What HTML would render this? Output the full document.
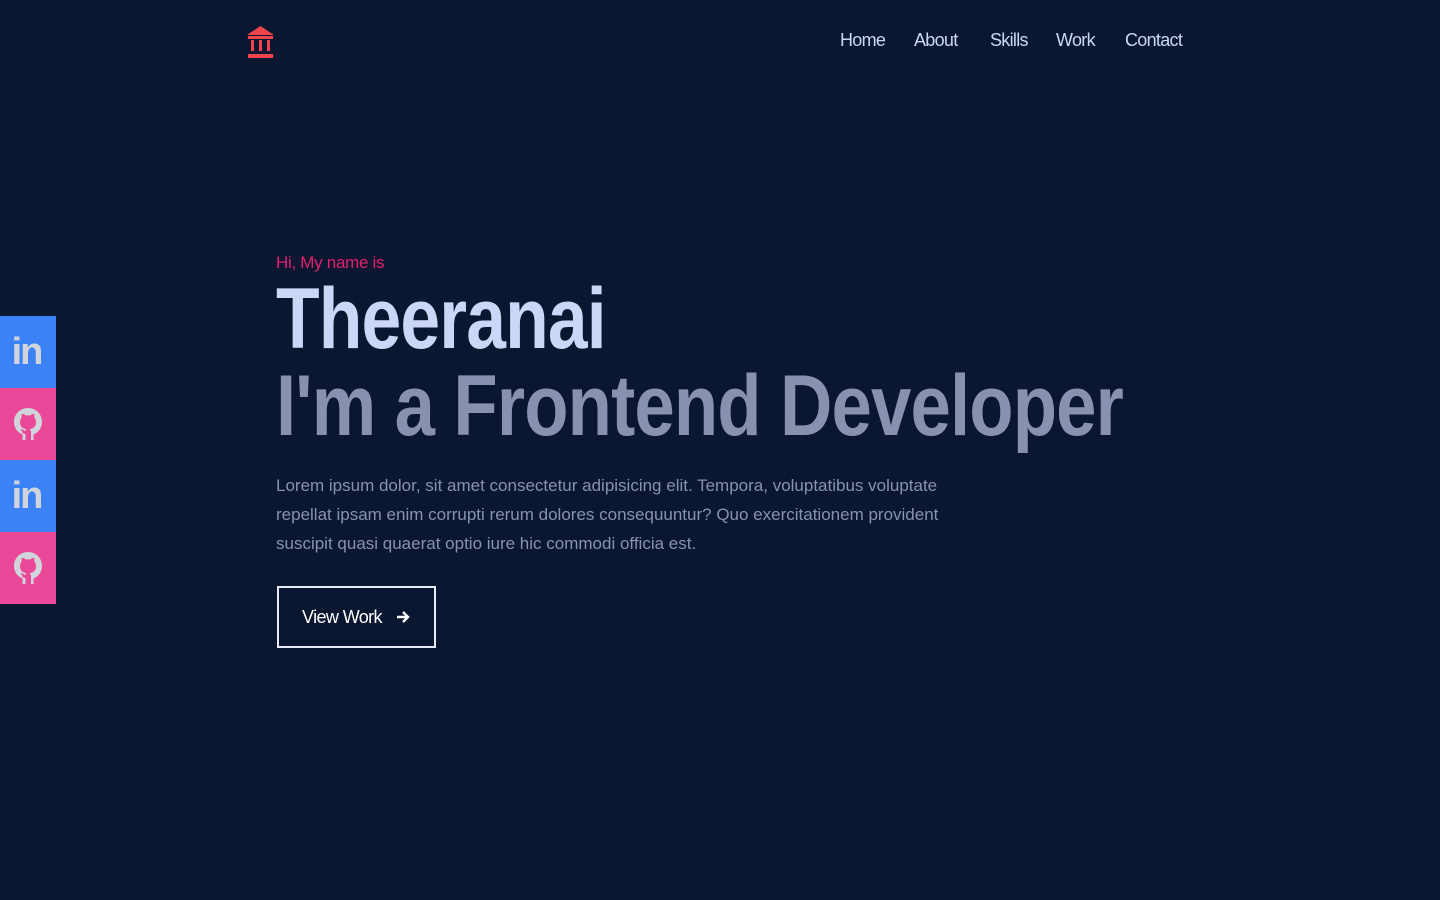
<!DOCTYPE html>
<html><head><meta charset="utf-8"><style>
*{margin:0;padding:0;box-sizing:border-box}
body{width:1440px;height:900px;background:#0b1730;font-family:"Liberation Sans",sans-serif;position:relative;overflow:hidden}
.nav a{position:absolute;top:30px;color:#ccd6f6;font-size:18px;text-decoration:none;letter-spacing:-0.7px}
.side{position:absolute;left:0;width:56px;height:72px;display:flex;align-items:center;justify-content:center}
.b{background:#3b82f6}.p{background:#ec4899}
.big{position:absolute;left:276px;font-weight:bold;font-size:86px;transform-origin:0 0;white-space:nowrap;letter-spacing:-1px}
</style></head><body>
<svg style="position:absolute;left:247px;top:26px" width="27" height="33" viewBox="0 0 27 33">
<path d="M13.5 0L0 9h27z" fill="#f0444c"/><rect x="1" y="10" width="25" height="3" fill="#f0444c"/>
<rect x="4" y="14" width="3" height="11" fill="#f0444c"/><rect x="12" y="14" width="3" height="11" fill="#f0444c"/><rect x="20" y="14" width="3" height="11" fill="#f0444c"/>
<rect x="1" y="28" width="25" height="4" fill="#f0444c"/></svg>
<div class="nav"><a style="left:840px">Home</a><a style="left:914px">About</a><a style="left:990px">Skills</a><a style="left:1056px">Work</a><a style="left:1125px">Contact</a></div>

<div class="side b" style="top:316px"><span style="color:#d1d5db;font-weight:bold;font-size:38px;letter-spacing:-2px;margin-left:-3px">in</span></div>
<div class="side p" style="top:388px"><svg width="30" height="34" viewBox="0 0 30 34"><path d="M15 1C7 1 1 7 1 15c0 6 3.5 10.5 8.5 12.5V33h3v-6c-1.5 0-3-1-3.5-2.5L8 22c2 0 3 1.5 4 2.5.3-1 .8-1.8 1.5-2.2C9 21.5 7 19 7 15c0-1.8.6-3.2 1.6-4.3-.2-1-.2-2.6.4-4 1.5 0 3 1 4 1.8a10 10 0 014 0c1-.8 2.5-1.8 4-1.8.6 1.4.6 3 .4 4C22.4 11.8 23 13.2 23 15c0 4-2 6.5-6.5 7.3.8.6 1.5 1.7 1.5 3.2V33h2.5v-5.5C25.5 25.5 29 21 29 15 29 7 23 1 15 1z" fill="#d1d5db"/></svg></div>
<div class="side b" style="top:460px"><span style="color:#d1d5db;font-weight:bold;font-size:38px;letter-spacing:-2px;margin-left:-3px">in</span></div>
<div class="side p" style="top:532px"><svg width="30" height="34" viewBox="0 0 30 34"><path d="M15 1C7 1 1 7 1 15c0 6 3.5 10.5 8.5 12.5V33h3v-6c-1.5 0-3-1-3.5-2.5L8 22c2 0 3 1.5 4 2.5.3-1 .8-1.8 1.5-2.2C9 21.5 7 19 7 15c0-1.8.6-3.2 1.6-4.3-.2-1-.2-2.6.4-4 1.5 0 3 1 4 1.8a10 10 0 014 0c1-.8 2.5-1.8 4-1.8.6 1.4.6 3 .4 4C22.4 11.8 23 13.2 23 15c0 4-2 6.5-6.5 7.3.8.6 1.5 1.7 1.5 3.2V33h2.5v-5.5C25.5 25.5 29 21 29 15 29 7 23 1 15 1z" fill="#d1d5db"/></svg></div>

<div style="position:absolute;left:276px;top:253px;color:#e3206f;font-size:17px;letter-spacing:-0.3px">Hi, My name is</div>
<div class="big" style="top:270px;color:#ccd6f6;transform:scaleX(0.83)">Theeranai</div>
<div class="big" style="top:357px;color:#8892b0;transform:scaleX(0.843)">I'm a Frontend Developer</div>
<div style="position:absolute;left:276px;top:471px;color:#8892b0;font-size:17px;line-height:29px;letter-spacing:0px;white-space:nowrap">Lorem ipsum dolor, sit amet consectetur adipisicing elit. Tempora, voluptatibus voluptate<br>repellat ipsam enim corrupti rerum dolores consequuntur? Quo exercitationem provident<br>suscipit quasi quaerat optio iure hic commodi officia est.</div>
<div style="position:absolute;left:277px;top:586px;width:159px;height:62px;border:2px solid #e6ebf5;color:#fff;font-size:18px;display:flex;align-items:center;padding-left:23px;letter-spacing:-0.6px">View Work<svg style="margin-left:13px" width="16" height="16" viewBox="0 0 16 16"><path d="M2 8h11M8 3l5 5-5 5" stroke="#fff" stroke-width="2.4" fill="none"/></svg></div>
</body></html>
